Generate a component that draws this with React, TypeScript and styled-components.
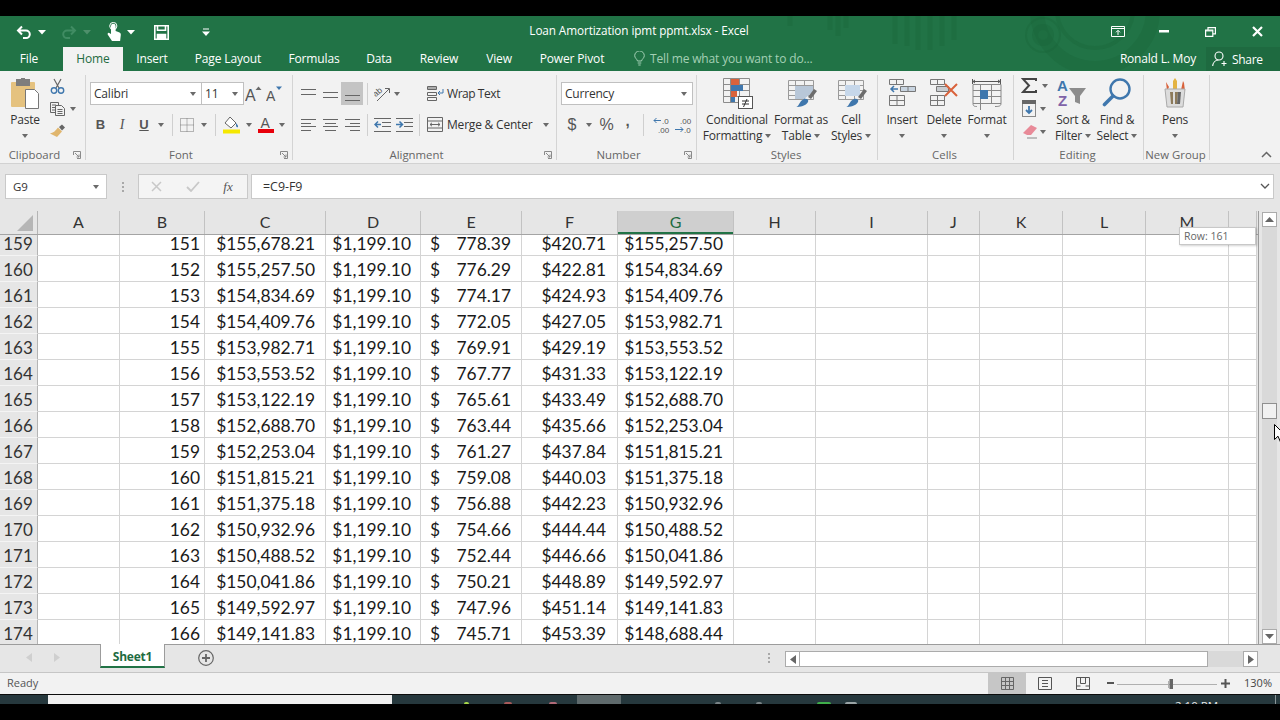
import React from "react";
import styled, { createGlobalStyle } from "styled-components";

const Global = createGlobalStyle`
  html, body { margin: 0; padding: 0; background: #000; }
  * { box-sizing: border-box; }
`;
const UI = `"Open Sans", "Noto Sans", sans-serif`;
const CELL = `Lato, "Open Sans", sans-serif`;

const Page = styled.div`
  width: 1280px; height: 720px; overflow: hidden; background: #000;
  display: flex; flex-direction: column; font-family: ${UI}; position: relative;
`;
const Bar = styled.div<{ $h: number }>`height: ${(p) => p.$h}px; flex: none; background: #000;`;
const Chrome = styled.div`flex: none; background: #217346; position: relative;`;
const TitleBar = styled.div`
  height: 31px; display: flex; align-items: center;
  position: relative; color: #fff;
`;
const Pattern = styled.svg`position: absolute; left: 0; top: 0; pointer-events: none;`;
const Qat = styled.div`display: flex; align-items: center; height: 100%; padding-top: 1px; position: relative;`;
const Slot = styled.div<{ $w: number }>`
  width: ${(p) => p.$w}px; flex: none; display: flex; align-items: center; justify-content: center; height: 100%;
`;
const TitleText = styled.div`
  position: absolute; left: 0; right: 2px; top: 0; height: 100%; line-height: 29px; text-align: center;
  font-size: 11.75px; letter-spacing: -0.1px;
`;
const WinButtons = styled.div`display: flex; margin-left: auto; height: 100%; align-items: center; position: relative;`;
const TabBar = styled.div`
  height: 24px; display: flex; align-items: stretch; color: #fff; font-size: 12px; position: relative;
`;
const Tab = styled.div<{ $w: number; $on?: boolean; $ml?: number }>`
  width: ${(p) => p.$w}px; flex: none; margin-left: ${(p) => p.$ml || 0}px; text-align: center; line-height: 23px;
  letter-spacing: -0.15px;
  background: ${(p) => (p.$on ? "#f2f2f2" : "transparent")}; color: ${(p) => (p.$on ? "#1e6b41" : "#fff")};
`;
const TellMe = styled.div`
  display: flex; align-items: center; margin-left: 15px; color: #a4d0b5; font-size: 12px; letter-spacing: -0.16px; gap: 5px; padding-bottom: 1px;
`;
const UserName = styled.div`margin-left: auto; line-height: 23px; letter-spacing: -0.2px; margin-right: 10px;`;
const Share = styled.div`
  width: 74px; background: #1e6a40; display: flex; align-items: center; padding-left: 6px; gap: 4px; letter-spacing: -0.3px; line-height: 23px;
`;

const Ribbon = styled.div`
  height: 93px; flex: none; background: #f2f2f2; border-bottom: 1px solid #d2d2d2;
  display: flex; align-items: flex-start; padding-top: 4px; color: #333; font-size: 12px;
`;
const Group = styled.div<{ $w: number }>`
  width: ${(p) => p.$w}px; height: 85px; flex: none; border-right: 1px solid #d4d4d4; position: relative;
  display: flex; flex-direction: column;
`;
const GroupBody = styled.div<{ $pl?: number }>`
  height: 72px; flex: none; display: flex; padding-left: ${(p) => p.$pl || 0}px;
`;
const GroupLabel = styled.div<{ $launch?: boolean }>`
  height: 13px; line-height: 16px; text-align: center; color: #666; font-size: 11.4px; letter-spacing: 0;
  padding-right: ${(p) => (p.$launch ? 16 : 2)}px; white-space: nowrap;
`;
const Launcher = styled.svg`position: absolute; right: 4px; bottom: 1px;`;
const BigButton = styled.div<{ $w: number }>`
  width: ${(p) => p.$w}px; flex: none; display: flex; flex-direction: column; align-items: center; padding-top: 3px;
  font-size: 12px; line-height: 16px; letter-spacing: -0.2px; white-space: nowrap; color: #333;
`;
const BigIcon = styled.div`height: 34px; width: 100%; display: flex; justify-content: center; flex: none;`;
const CaretLine = styled.div`display: flex; align-items: center; gap: 3px; height: 16px;`;
const Caret = styled.span`
  display: inline-block; flex: none; width: 0; height: 0; border-left: 3.5px solid transparent; border-right: 3.5px solid transparent;
  border-top: 4px solid #6a6a6a;
`;
const SmallStack = styled.div<{ $w: number }>`
  width: ${(p) => p.$w}px; flex: none; display: flex; flex-direction: column; margin-top: -1px;
`;
const StackRow = styled.div`height: 23px; display: flex; align-items: center; flex: none;`;
const Rows = styled.div`display: flex; flex-direction: column; gap: 8px; padding-top: 7px;`;
const Row2 = styled.div`display: flex; height: 23px; align-items: center;`;
const Combo = styled.div<{ $w: number }>`
  width: ${(p) => p.$w}px; height: 23px; flex: none; background: #fff; border: 1px solid #c0c0c0; margin-right: -1px;
  display: flex; align-items: center; justify-content: space-between; padding: 0 5px 0 3px; font-size: 12px; letter-spacing: -0.2px; color: #333;
`;
const VSep = styled.div`width: 1px; height: 22px; background: #cfcfcf;`;
const Glyph = styled.span<{ $size: number; $b?: boolean; $i?: boolean; $u?: boolean; $serif?: boolean; $raise?: number }>`
  font-family: ${(p) => (p.$serif ? `"Liberation Serif", serif` : `"Liberation Sans", sans-serif`)};
  font-size: ${(p) => p.$size}px; font-weight: ${(p) => (p.$b ? 700 : 400)};
  font-style: ${(p) => (p.$i ? "italic" : "normal")}; text-decoration: ${(p) => (p.$u ? "underline" : "none")};
  color: #555; line-height: 1; padding-bottom: ${(p) => p.$raise || 0}px;
`;
const Highlight = styled.div`
  width: 22px; height: 23px; background: #c4c4c4; display: flex; align-items: center; justify-content: center;
`;
const TextBtn = styled.div<{ $w: number; $ls: number }>`
  width: ${(p) => p.$w}px; display: flex; align-items: center; gap: 4px; padding-left: 1px; letter-spacing: ${(p) => p.$ls}px; white-space: nowrap; font-size: 12px; color: #333;
`;
const Collapse = styled.div`margin-left: auto; padding: 70px 8px 0 0;`;

const FormulaArea = styled.div`
  height: 47px; flex: none; background: #e6e6e6; display: flex; padding: 10px 6px 12px 5px; align-items: stretch;
  font-size: 12px; color: #333;
`;
const NameBox = styled.div`
  width: 102px; background: #fff; border: 1px solid #c9c9c9; display: flex; align-items: center; justify-content: space-between;
  padding: 0 7px 0 7px; font-size: 11.5px;
`;
const Dots = styled.div`
  width: 31px; flex: none; display: flex; flex-direction: column; align-items: center; justify-content: center; gap: 2px;
  span { width: 2px; height: 2px; background: #a8a8a8; }
`;
const FxBox = styled.div`
  width: 110px; background: #f4f4f4; border: 1px solid #c9c9c9; display: flex; align-items: center;
`;
const FormulaInput = styled.div`
  flex: 1; margin-left: 3px; background: #fff; border: 1px solid #c9c9c9; display: flex; align-items: center; justify-content: space-between;
  padding: 0 3px 0 11px; font-size: 12.4px;
`;

const GridArea = styled.div`height: 433px; flex: none; display: flex; background: #e6e6e6; position: relative; overflow: hidden;`;
const Sheet = styled.div`width: 1259px; flex: none; overflow: hidden; border-right: 1px solid #9c9c9c;`;
const COLS = "38px 82px 85px 121px 95px 101px 96px 116px 82px 112px 52px 83px 83px 83px 28px";
const HeaderRow = styled.div`
  height: 24px; display: grid; grid-template-columns: ${COLS}; background: #e6e6e6; border-bottom: 1px solid #a4a4a4;
`;
const Corner = styled.div`border-right: 1px solid #b4b4b4; display: flex; align-items: flex-start; padding: 4px 0 0 17px;`;
const ColHead = styled.div<{ $sel?: boolean }>`
  font-family: ${CELL}; font-size: 16px; text-align: center; line-height: 22px; height: 23px;
  border-right: 1px solid #c2c2c2; color: ${(p) => (p.$sel ? "#1e6b41" : "#333")};
  background: ${(p) => (p.$sel ? "#cfcfcf" : "transparent")};
  box-shadow: ${(p) => (p.$sel ? "inset 0 -2px 0 #217346" : "none")};
`;
const DataRow = styled.div<{ $h: number }>`
  height: ${(p) => p.$h}px; display: grid; grid-template-columns: ${COLS}; grid-template-rows: 26px; align-content: end; overflow: hidden; flex: none;
`;
const RowHead = styled.div`
  height: 26px; background: #e6e6e6; border-right: 1px solid #b4b4b4; border-bottom: 1px solid #f4f4f4; text-align: center;
  font-family: ${CELL}; font-size: 17px; line-height: 27px; color: #333; padding-right: 1px; overflow: hidden;
`;
const Cell = styled.div<{ $pr?: number }>`
  height: 26px; background: #fff; border-right: 1px solid #d4d4d4; border-bottom: 1px solid #d4d4d4; color: #1a1a1a;
  font-family: ${CELL}; font-size: 17.4px; line-height: 27px; text-align: right; padding-right: ${(p) => p.$pr || 0}px; white-space: nowrap;
  display: flex; justify-content: flex-end;
`;
const Acct = styled(Cell)`justify-content: space-between; padding-left: 9px;`;
const VScroll = styled.div`
  flex: 1; display: flex; flex-direction: column; align-items: center; padding-top: 1px; position: relative;
`;
const VTrack = styled.div`
  width: 15px; flex: 1; background: #d9d9d9; display: flex; flex-direction: column; align-items: center; padding-top: 176px;
`;
const SBtn = styled.div<{ $w?: number; $h?: number }>`
  width: ${(p) => p.$w || 15}px; height: ${(p) => p.$h || 15}px; flex: none; background: #fff; border: 1px solid #ababab;
  display: flex; align-items: center; justify-content: center;
`;
const Thumb = styled.div`width: 15px; height: 16px; background: #f1f1f1; border: 1px solid #8f8f8f;`;
const Tooltip = styled.div`
  position: absolute; left: 1179px; top: 16px; width: 77px; height: 18px; background: #fff; border: 1px solid #c8c8c8;
  box-shadow: 1px 1px 2px rgba(0,0,0,.18); font-size: 10.5px; line-height: 16px; padding-left: 4px; color: #666;
`;
const Pointer = styled.svg`position: absolute; left: 1274px; top: 213px;`;

const SheetBar = styled.div`
  height: 28px; flex: none; background: #e6e6e6; border-top: 1px solid #9c9c9c; display: flex; align-items: flex-start; position: relative;
`;
const NavSlot = styled.div<{ $w: number; $ml?: number }>`
  width: ${(p) => p.$w}px; margin-left: ${(p) => p.$ml || 0}px; height: 25px; flex: none; display: flex; align-items: center; justify-content: center;
`;
const SheetTab = styled.div`
  width: 65px; height: 24px; margin-top: -1px; background: #fff; border-left: 1px solid #9c9c9c; border-right: 1px solid #9c9c9c;
  border-bottom: 2px solid #217346; text-align: center; font-size: 12px; font-weight: 700; letter-spacing: -0.2px; line-height: 26px; color: #1e6b41; flex: none;
`;
const HScroll = styled.div`
  margin-left: 12px; margin-top: 6px; width: 473px; height: 16px; display: flex; background: #d9d9d9;
`;
const HThumb = styled.div`width: 408px; height: 16px; background: #fff; border: 1px solid #ababab; border-left: none; flex: none;`;
const HGap = styled.div`flex: 1;`;

const StatusBar = styled.div`
  height: 22px; flex: none; background: #f2f2f2; border-top: 1px solid #c6c6c6; display: flex; align-items: stretch;
  font-size: 11px; color: #555;
`;
const Ready = styled.div`padding-left: 7px; line-height: 20px; width: 988px; flex: none;`;
const ViewBtn = styled.div<{ $on?: boolean; $w: number }>`
  width: ${(p) => p.$w}px; flex: none; display: flex; align-items: center; justify-content: center; background: ${(p) => (p.$on ? "#c6c6c6" : "transparent")};
`;
const Zoom = styled.div`flex: 1; text-align: right; padding-right: 8px; line-height: 20px; color: #444;`;

const Taskbar = styled.div`height: 10px; flex: none; background: #26383d; border-top: 1px solid #0c0c0c; display: flex; overflow: hidden;`;
const TaskSeg = styled.div<{ $w: number; $c: string }>`width: ${(p) => p.$w}px; flex: none; background: ${(p) => p.$c}; height: 100%; position: relative; overflow: hidden;`;
const Spot = styled.span<{ $l: number; $c: string; $w?: number }>`
  position: absolute; left: ${(p) => p.$l}px; bottom: 0; width: ${(p) => p.$w || 8}px; height: 2px; border-radius: 4px 4px 0 0; background: ${(p) => p.$c};
`;
const Clock = styled.span`position: absolute; left: 284px; top: 4px; color: #e8e8e8; font-size: 11.5px; line-height: 14px; white-space: nowrap;`;
const TaskEdge = styled.span`position: absolute; left: 384px; top: 0; width: 1px; height: 100%; background: #8a9598;`;

const BLUE = "#3f77ad";
const RED = "#d9623b";

const Undo = ({ c = "#fff" }: { c?: string }) => (
  <svg width="16" height="15" viewBox="0 0 16 15" fill="none" stroke={c} strokeWidth="2"><path d="M6 1.5 2 5.5l4 4M2 5.5h8a3.8 3.8 0 0 1 0 7.6H7" /></svg>
);
const Redo = ({ c }: { c: string }) => (
  <svg width="16" height="15" viewBox="0 0 16 15" fill="none" stroke={c} strokeWidth="2"><path d="M10 1.5l4 4-4 4M14 5.5H6a3.8 3.8 0 0 0 0 7.6h3" /></svg>
);
const WhiteCaret = ({ o = 1 }: { o?: number }) => (
  <svg width="8" height="5" opacity={o}><path d="M0 0h8L4 4.5z" fill="#fff" /></svg>
);
const Touch = () => (
  <svg width="14" height="20" viewBox="0 0 14 20"><path d="M4 7V4a2.3 2.3 0 0 1 4.6 0v5l3.4 1.2c1.3.5 2 1.4 1.8 2.8l-.7 6H5L1 13c-.8-1-.3-2 .8-2.2L4 12z" fill="#fff" /><circle cx="6.3" cy="4" r="3.6" fill="none" stroke="#fff" strokeWidth="1" /></svg>
);
const SaveIcon = () => (
  <svg width="15" height="15" viewBox="0 0 15 15" fill="none" stroke="#fff" strokeWidth="1.6"><path d="M.8.8h13.4v13.4H.8z" /><path d="M3.5 1v4.2h8V1" /><path d="M3.5 14v-4.5h8V14" fill="#fff" /></svg>
);
const QatMore = () => (
  <svg width="8" height="8"><path d="M1 1h6" stroke="#fff" /><path d="M0 3.5h8L4 8z" fill="#fff" /></svg>
);
const RibbonDisplay = () => (
  <svg width="14" height="11" viewBox="0 0 14 11" fill="none" stroke="#fff"><path d="M.5.5h13v10H.5zM.5 2.5h13" /><path d="M7 9V4.5M5 6.3l2-2 2 2" /></svg>
);
const MinIcon = () => <svg width="10" height="3"><path d="M0 0h10v2.5H0z" fill="#fff" /></svg>;
const RestoreIcon = () => (
  <svg width="11" height="10" viewBox="0 0 11 10" fill="none" stroke="#fff" strokeWidth="1.2"><path d="M.6 3h7.2v6.4H.6zM3 3V.6h7.4v6.2H8" /><path d="M.6 3.8h7.2" /></svg>
);
const CloseIcon = () => (
  <svg width="11" height="11" viewBox="0 0 11 11" stroke="#fff" strokeWidth="2.2"><path d="M1 1l9 9M10 1l-9 9" /></svg>
);
const Bulb = () => (
  <svg width="11" height="15" viewBox="0 0 11 15" fill="none" stroke="#a4d0b5" strokeWidth="1"><path d="M3.5 10C3 8 .7 7 .7 4.7a4.8 4.8 0 0 1 9.6 0C10.3 7 8 8 7.5 10zM3.7 12h3.6M4.3 14h2.4" /></svg>
);
const UserPlus = () => (
  <svg width="16" height="16" viewBox="0 0 16 16" fill="none" stroke="#fff" strokeWidth="1.1"><circle cx="7" cy="5" r="4" /><path d="M.7 15c.3-3.3 2.6-6 5.7-6" /><path d="M12 10v5M9.5 12.5h5" /></svg>
);

const PasteIcon = () => (
  <svg width="30" height="32" viewBox="0 0 30 32"><rect x="1" y="4" width="24" height="25" rx="1" fill="#e5c27f" /><rect x="6" y="1" width="14" height="7" fill="#7d7d7d" /><rect x="11" y="0" width="4" height="3" fill="#7d7d7d" /><path d="M15.5 11.5h9l4 4v15h-13z" fill="#fff" stroke="#777" /></svg>
);
const CutIcon = () => (
  <svg width="15" height="16" viewBox="0 0 15 16" fill="none"><path d="M4 1l5 9M11 1l-5 9" stroke="#666" strokeWidth="1.2" /><circle cx="4" cy="12.5" r="2.7" stroke={BLUE} strokeWidth="1.4" /><circle cx="11" cy="12.5" r="2.7" stroke={BLUE} strokeWidth="1.4" /></svg>
);
const CopyIcon = () => (
  <svg width="15" height="14" viewBox="0 0 15 14" fill="#f2f2f2" stroke="#666"><path d="M.5.5h8v10h-8zM2 3h4M2 5.5h4M2 8h4" /><path d="M5.5 3.5h6l3 3v7h-9z" /><path d="M7.5 7.5h5M7.5 9.5h5M7.5 11.5h5" /></svg>
);
const Painter = () => (
  <svg width="17" height="15" viewBox="0 0 17 15"><path d="M10 3l3-2.500 3 3L13 6.500z" fill="#666" /><path d="M9 3.500l4 4L8 13 1 9.500c3-.5 5.500-2.500 8-6z" fill="#e0b66e" /></svg>
);
const GrowA = ({ up }: { up: boolean }) => (
  <svg width="18" height="18" viewBox="0 0 18 18"><text x="0" y="16" fontSize={up ? 16 : 14} fontFamily="Liberation Sans" fill="#555">A</text><path d={up ? "M10.500 5l3-3.500 3 3.500z" : "M10 1.500h6L13 5z"} fill={up ? "#6a6a6a" : BLUE} /></svg>
);
const BorderIcon = () => (
  <svg width="14" height="14" viewBox="0 0 14 14" fill="none" stroke="#777" strokeDasharray="1 1"><path d="M.5.5h13v13H.5zM7 .5v13M.5 7h13" /></svg>
);
const FillIcon = () => (
  <svg width="17" height="18" viewBox="0 0 17 18"><path d="M7 1l6 6-5 5-6-5z" fill="#fff" stroke="#666" /><path d="M13 7c1 1.500 2.500 2.500 2 4-.6 1-2-.2-2-1.500z" fill={BLUE} /><rect y="13.500" x="0" width="17" height="4" fill="#f5e800" /></svg>
);
const ColorA = () => (
  <svg width="16" height="17" viewBox="0 0 16 17"><text x="2.500" y="12" fontSize="14" fontFamily="Liberation Sans" fill="#555">A</text><rect y="13" width="16" height="4" fill="#e8000b" /></svg>
);
const Lines = ({ w = 15, ys, x = [] as number[][] }: { w?: number; ys: number[]; x?: number[][] }) => (
  <svg width={w} height="16" viewBox={`0 0 ${w} 16`} stroke="#666">
    {ys.map((y, i) => <path key={i} d={`M${x[i] ? x[i][0] : 0} ${y}.5H${x[i] ? x[i][1] : w}`} />)}
  </svg>
);
const Orient = () => (
  <svg width="17" height="17" viewBox="0 0 17 17" fill="none" stroke="#666"><text x="0" y="10" transform="rotate(-40 4 9)" fontSize="8.500" stroke="none" fill="#555" fontFamily="Liberation Sans">ab</text><path d="M3 16L15 4M11 3.500h4.500V8" /></svg>
);
const Indent = ({ flip }: { flip: boolean }) => (
  <svg width="17" height="14" viewBox="0 0 17 14" fill="none"><path d="M0 .5h17M8 4.500h9M8 8.500h9M0 13.500h17" stroke="#666" /><path d={flip ? "M0 6.500h6M3.500 3.500l3 3-3 3" : "M7 6.500H1M4 3.500l-3 3 3 3"} stroke={BLUE} strokeWidth="1.500" /></svg>
);
const WrapIcon = () => (
  <svg width="17" height="15" viewBox="0 0 17 15" fill="none" stroke="#666"><path d="M.5.5h9v3h-9zM.5 6.500h9v3h-9zM.5 11.500h9v3h-9zM1 2h8" /><path d="M16 3v4h-5M13 5l-2 2 2 2" stroke={BLUE} /></svg>
);
const MergeIcon = () => (
  <svg width="16" height="15" viewBox="0 0 16 15" fill="none" stroke="#666"><path d="M.5.5h15v14H.5zM.500 4h15M.500 11h15M.500 4v7M15.500 4v7" /><path d="M3 7.500h10M5 5.800l-2 1.700 2 1.700M11 5.800l2 1.700-2 1.700" /></svg>
);
const DecIcon = ({ inc }: { inc: boolean }) => (
  <svg width="18" height="18" viewBox="0 0 18 18" fontFamily="Liberation Sans" fontSize="8" fill="#555">
    <text x={inc ? 9 : 5} y="7.500">{inc ? ".0" : ".00"}</text>
    <text x={inc ? 5 : 9} y="17">{inc ? ".00" : ".0"}</text>
    <path d={inc ? "M8 4.500H1M3.500 2L1 4.500 3.500 7" : "M0 13.500h8M5.500 11L8 13.500 5.500 16"} fill="none" stroke={BLUE} />
  </svg>
);
const Launch = () => (
  <Launcher width="8" height="8" viewBox="0 0 8 8" fill="none" stroke="#8a8a8a"><path d="M.5 4V.5H7.500V7.500H4" /><path d="M2 2l4 4M6 3.500V6H3.500" /></Launcher>
);
const CondIcon = () => (
  <svg width="32" height="32" viewBox="0 0 32 32" fill="none">
    <path d="M2.500 .5h26v24h-26zM2.500 6.500h26M2.500 12.500h26M2.500 18.500h26M9.500 .5v24M18.500 .5v24" stroke="#8c8c8c" />
    <rect x="10" y="1" width="8" height="6" fill={RED} /><rect x="10" y="7" width="12" height="6" fill={BLUE} />
    <rect x="10" y="13" width="6" height="6" fill={RED} /><rect x="10" y="19" width="4" height="5" fill={BLUE} />
    <rect x="17.500" y="18.500" width="14" height="12" fill="#fff" stroke="#555" />
    <path d="M21 23h7M21 26h7M26 21l-3.500 8" stroke="#333" />
  </svg>
);
const TableFmt = ({ cell }: { cell: boolean }) => (
  <svg width="32" height="32" viewBox="0 0 32 32" fill="none">
    <path d="M3.500 2.500h25v19h-25zM3.500 7.500h25M3.500 12.500h25M3.500 17.500h25M10.500 2.500v19M19.500 2.500v19" stroke="#9a9a9a" />
    {cell ? <rect x="10" y="7" width="15" height="11" fill="#c6d7ea" /> : <path d="M10 8h18v6l-9 7h-9z" fill="#b8c7d8" />}
    <path d="M23 19l6-8 3 2-6 8z" fill="#6c6c6c" />
    <path d="M11 29c3 0 3-6 8-8 3-1 5 1 4 3-2 4-8 5-12 5z" fill={BLUE} />
  </svg>
);
const InsertIcon = () => (
  <svg width="28" height="30" viewBox="0 0 28 30" fill="none" stroke="#777">
    <path d="M1.500 1.500h14v5h-14zM8.500 1.500v5M1.500 17.500h15v10h-15zM9 17.500v10M1.500 22.500h15" />
    <path d="M12.500 8.500h15v5h-15zM20 8.500v5" fill="#c8d4e0" />
    <path d="M10 11H3M6 8l-3 3 3 3" stroke={BLUE} strokeWidth="1.500" />
  </svg>
);
const DeleteIcon = () => (
  <svg width="30" height="30" viewBox="0 0 30 30" fill="none" stroke="#777">
    <path d="M1.500 1.500h14v5h-14zM8.500 1.500v5M1.500 17.500h14v10h-14zM8.500 17.500v10M1.500 22.500h14" />
    <path d="M7.500 8.500h12v5h-12z" fill="#c8ccd0" />
    <path d="M16 6l12 12M28 6L16 18" stroke={RED} strokeWidth="2" />
  </svg>
);
const FormatIcon = () => (
  <svg width="30" height="32" viewBox="0 0 30 32" fill="none" stroke="#888">
    <path d="M.5 1v5M28.500 1v5M1 3.500h27M3 2l-2 1.500L3 5M26 2l2 1.500L26 5" stroke="#555" />
    <path d="M1 6.500h28v19H1zM8.500 6.500v26M19.500 6.500v19M1 12.500h28M1 18.500h28M1 25.500c0 3 2 3 4 3M29 25.500c0 3-3 3-6 3" />
    <rect x="8" y="12" width="8" height="9" fill={BLUE} stroke="none" />
  </svg>
);
const SumIcon = () => <svg width="16" height="15" viewBox="0 0 16 15" fill="none" stroke="#444" strokeWidth="2"><path d="M15 3V1H2l6 6.500L2 14h13v-2" /></svg>;
const FillDown = () => (
  <svg width="14" height="17" viewBox="0 0 14 17" fill="none"><rect x=".5" y=".5" width="13" height="16" stroke="#888" /><rect x="0" y="0" width="14" height="4" fill="#666" /><path d="M7 6v7M4 10l3 3 3-3" stroke={BLUE} strokeWidth="1.800" /></svg>
);
const Eraser = () => (
  <svg width="15" height="14" viewBox="0 0 15 14"><path d="M9 0l6 3-6 7H5L1 8z" fill="#e88a98" /><path d="M5 13h10" stroke="#888" /></svg>
);
const SortIcon = () => (
  <svg width="32" height="30" viewBox="0 0 32 30" fontFamily="Liberation Sans" fontSize="15" fontWeight="700">
    <text x="0" y="13" fill={BLUE}>A</text><text x="1" y="28" fill="#8063a8">Z</text>
    <path d="M12 10h17l-6 8v8l-5-2v-6z" fill="#8c8c8c" />
  </svg>
);
const FindIcon = () => (
  <svg width="30" height="30" viewBox="0 0 30 30" fill="none"><circle cx="18" cy="11" r="9.500" stroke={BLUE} strokeWidth="2.400" /><path d="M11 18L2.500 26.500" stroke={BLUE} strokeWidth="3.600" strokeLinecap="round" /></svg>
);
const PensIcon = () => (
  <svg width="22" height="30" viewBox="0 0 22 30"><path d="M3 13L2 4l3 5zM17 12l2-9 1 2 1 8z" fill={RED} /><path d="M9 12V3l2-3 2 3v9z" fill="#e3b341" /><path d="M1 11h20l-2 18H3z" fill="#dcdcdc" stroke="#aaa" /><path d="M6 14l1 12h2V14zM11 14v12h2l1-12z" fill="#8c7a5a" /><path d="M14 14l-1 12h3l1-12z" fill="#666" /></svg>
);
const ChevUp = () => <svg width="11" height="7" fill="none" stroke="#666" strokeWidth="1.500"><path d="M1 6l4.500-4.500L10 6" /></svg>;
const SheetPlus = () => (
  <svg width="16" height="16" fill="none" stroke="#666"><circle cx="8" cy="8" r="7.300" strokeWidth="1.200" /><path d="M8 4v8M4 8h8" strokeWidth="1.800" /></svg>
);
const Tri = ({ d, c = "#666" }: { d: "u" | "d" | "l" | "r"; c?: string }) => {
  const p = { u: "M0 5h9L4.500 0z", d: "M0 0h9L4.500 5z", l: "M6 0v9L0 4.500z", r: "M0 0v9l6-4.500z" }[d];
  return <svg width={d === "l" || d === "r" ? 6 : 9} height={d === "l" || d === "r" ? 9 : 5}><path d={p} fill={c} /></svg>;
};

const rows: string[][] = [
  ["159","151","$155,678.21","778.39","$420.71","$155,257.50"],
  ["160","152","$155,257.50","776.29","$422.81","$154,834.69"],
  ["161","153","$154,834.69","774.17","$424.93","$154,409.76"],
  ["162","154","$154,409.76","772.05","$427.05","$153,982.71"],
  ["163","155","$153,982.71","769.91","$429.19","$153,553.52"],
  ["164","156","$153,553.52","767.77","$431.33","$153,122.19"],
  ["165","157","$153,122.19","765.61","$433.49","$152,688.70"],
  ["166","158","$152,688.70","763.44","$435.66","$152,253.04"],
  ["167","159","$152,253.04","761.27","$437.84","$151,815.21"],
  ["168","160","$151,815.21","759.08","$440.03","$151,375.18"],
  ["169","161","$151,375.18","756.88","$442.23","$150,932.96"],
  ["170","162","$150,932.96","754.66","$444.44","$150,488.52"],
  ["171","163","$150,488.52","752.44","$446.66","$150,041.86"],
  ["172","164","$150,041.86","750.21","$448.89","$149,592.97"],
  ["173","165","$149,592.97","747.96","$451.14","$149,141.83"],
  ["174","166","$149,141.83","745.71","$453.39","$148,688.44"],
];
const heads = ["A","B","C","D","E","F","G","H","I","J","K","L","M",""];

export default function App() {
  return (
    <Page>
      <Global />
      <Bar $h={16} />
      <Chrome>
        <Pattern width="1280" height="55" viewBox="0 0 1280 55" fill="none">
          <g stroke="#1a6239" strokeOpacity=".32">
            <circle cx="1043" cy="19" r="8" strokeWidth="6" />
            <circle cx="1043" cy="19" r="17" strokeWidth="2" />
            <circle cx="1095" cy="-6" r="58" strokeWidth="14" />
            <circle cx="1095" cy="-6" r="38" strokeWidth="4" />
            <path d="M895 0v28M907 0v30M918 0v34M930 0v34M942 0v30M954 0v24M830 0v14M838 0v20M846 0v12M790 0v10" strokeWidth="5" />
          </g>
        </Pattern>
        <TitleBar>
          <Qat>
            <Slot $w={16} />
            <Slot $w={16}><Undo /></Slot>
            <Slot $w={20}><WhiteCaret /></Slot>
            <Slot $w={9} />
            <Slot $w={16}><Redo c="#408c63" /></Slot>
            <Slot $w={19}><WhiteCaret o={0.2} /></Slot>
            <Slot $w={10} />
            <Slot $w={16}><Touch /></Slot>
            <Slot $w={18}><WhiteCaret /></Slot>
            <Slot $w={13} />
            <Slot $w={17}><SaveIcon /></Slot>
            <Slot $w={28} />
            <Slot $w={16}><QatMore /></Slot>
          </Qat>
          <TitleText>Loan Amortization ipmt ppmt.xlsx - Excel</TitleText>
          <WinButtons>
            <Slot $w={46}><RibbonDisplay /></Slot>
            <Slot $w={46}><MinIcon /></Slot>
            <Slot $w={47}><RestoreIcon /></Slot>
            <Slot $w={46}><CloseIcon /></Slot>
          </WinButtons>
        </TitleBar>
        <TabBar>
          <Tab $w={58}>File</Tab>
          <Tab $w={60} $ml={5} $on>Home</Tab>
          <Tab $w={58}>Insert</Tab>
          <Tab $w={94}>Page Layout</Tab>
          <Tab $w={78}>Formulas</Tab>
          <Tab $w={52}>Data</Tab>
          <Tab $w={68}>Review</Tab>
          <Tab $w={52}>View</Tab>
          <Tab $w={94}>Power Pivot</Tab>
          <TellMe><Bulb />Tell me what you want to do...</TellMe>
          <UserName>Ronald L. Moy</UserName>
          <Share><UserPlus />Share</Share>
        </TabBar>
      </Chrome>
      <Ribbon>
        <Group $w={86}>
          <GroupBody $pl={3}>
            <BigButton $w={44}>
              <BigIcon><PasteIcon /></BigIcon>
              <div>Paste</div>
              <CaretLine><Caret /></CaretLine>
            </BigButton>
            <SmallStack $w={34}>
              <StackRow><Slot $w={20}><CutIcon /></Slot></StackRow>
              <StackRow><Slot $w={20}><CopyIcon /></Slot><Slot $w={12}><Caret /></Slot></StackRow>
              <StackRow><Slot $w={20}><Painter /></Slot></StackRow>
            </SmallStack>
          </GroupBody>
          <GroupLabel $launch>Clipboard</GroupLabel>
          <Launch />
        </Group>
        <Group $w={207}>
          <GroupBody $pl={4}>
            <Rows>
              <Row2>
                <Combo $w={112}>Calibri<Caret /></Combo>
                <Combo $w={43}>11<Caret /></Combo>
                <Slot $w={21}><GrowA up /></Slot>
                <Slot $w={21}><GrowA up={false} /></Slot>
              </Row2>
              <Row2>
                <Slot $w={21}><Glyph $size={13} $b>B</Glyph></Slot>
                <Slot $w={22}><Glyph $size={14} $i $serif>I</Glyph></Slot>
                <Slot $w={22}><Glyph $size={13} $b $u>U</Glyph></Slot>
                <Slot $w={12}><Caret /></Slot>
                <Slot $w={10}><VSep /></Slot>
                <Slot $w={20}><BorderIcon /></Slot>
                <Slot $w={14}><Caret /></Slot>
                <Slot $w={8}><VSep /></Slot>
                <Slot $w={25}><FillIcon /></Slot>
                <Slot $w={9}><Caret /></Slot>
                <Slot $w={25}><ColorA /></Slot>
                <Slot $w={8}><Caret /></Slot>
              </Row2>
            </Rows>
          </GroupBody>
          <GroupLabel $launch>Font</GroupLabel>
          <Launch />
        </Group>
        <Group $w={264}>
          <GroupBody $pl={4}>
            <Rows>
              <Row2>
                <Slot $w={22}><Lines ys={[3, 8]} /></Slot>
                <Slot $w={22}><Lines ys={[6, 11]} /></Slot>
                <Highlight><Lines ys={[9, 14]} /></Highlight>
                <Slot $w={8}><VSep /></Slot>
                <Slot $w={22}><Orient /></Slot>
                <Slot $w={8}><Caret /></Slot>
                <Slot $w={23} />
                <Slot $w={22}><WrapIcon /></Slot>
                <TextBtn $w={70} $ls={-0.45}>Wrap Text</TextBtn>
              </Row2>
              <Row2>
                <Slot $w={22}><Lines ys={[2, 6, 9, 13]} x={[[0, 15], [0, 10], [0, 15], [0, 10]]} /></Slot>
                <Slot $w={22}><Lines ys={[2, 6, 9, 13]} x={[[0, 15], [2, 13], [0, 15], [2, 13]]} /></Slot>
                <Slot $w={22}><Lines ys={[2, 6, 9, 13]} x={[[0, 15], [5, 15], [0, 15], [5, 15]]} /></Slot>
                <Slot $w={8}><VSep /></Slot>
                <Slot $w={22}><Indent flip={false} /></Slot>
                <Slot $w={22}><Indent flip /></Slot>
                <Slot $w={9}><VSep /></Slot>
                <Slot $w={22}><MergeIcon /></Slot>
                <TextBtn $w={100} $ls={-0.2}>Merge &amp; Center<Slot $w={20}><Caret /></Slot></TextBtn>
              </Row2>
            </Rows>
          </GroupBody>
          <GroupLabel $launch>Alignment</GroupLabel>
          <Launch />
        </Group>
        <Group $w={140}>
          <GroupBody $pl={4}>
            <Rows>
              <Row2><Combo $w={132}>Currency<Caret /></Combo></Row2>
              <Row2>
                <Slot $w={22}><Glyph $size={16}>$</Glyph></Slot>
                <Slot $w={11}><Caret /></Slot>
                <Slot $w={25}><Glyph $size={16}>%</Glyph></Slot>
                <Slot $w={17}><Glyph $size={15} $b $raise={8}>,</Glyph></Slot>
                <Slot $w={15}><VSep /></Slot>
                <Slot $w={22}><DecIcon inc /></Slot>
                <Slot $w={22}><DecIcon inc={false} /></Slot>
              </Row2>
            </Rows>
          </GroupBody>
          <GroupLabel $launch>Number</GroupLabel>
          <Launch />
        </Group>
        <Group $w={181}>
          <GroupBody $pl={6}>
            <BigButton $w={68}>
              <BigIcon><CondIcon /></BigIcon>
              <div>Conditional</div>
              <CaretLine>Formatting<Caret /></CaretLine>
            </BigButton>
            <BigButton $w={60}>
              <BigIcon><TableFmt cell={false} /></BigIcon>
              <div>Format as</div>
              <CaretLine>Table<Caret /></CaretLine>
            </BigButton>
            <BigButton $w={40}>
              <BigIcon><TableFmt cell /></BigIcon>
              <div>Cell</div>
              <CaretLine>Styles<Caret /></CaretLine>
            </BigButton>
          </GroupBody>
          <GroupLabel>Styles</GroupLabel>
        </Group>
        <Group $w={136}>
          <GroupBody $pl={3}>
            <BigButton $w={42}>
              <BigIcon><InsertIcon /></BigIcon>
              <div>Insert</div>
              <CaretLine><Caret /></CaretLine>
            </BigButton>
            <BigButton $w={42}>
              <BigIcon><DeleteIcon /></BigIcon>
              <div>Delete</div>
              <CaretLine><Caret /></CaretLine>
            </BigButton>
            <BigButton $w={44}>
              <BigIcon><FormatIcon /></BigIcon>
              <div>Format</div>
              <CaretLine><Caret /></CaretLine>
            </BigButton>
          </GroupBody>
          <GroupLabel>Cells</GroupLabel>
        </Group>
        <Group $w={130}>
          <GroupBody $pl={5}>
            <SmallStack $w={32}>
              <StackRow><Slot $w={20}><SumIcon /></Slot><Slot $w={12}><Caret /></Slot></StackRow>
              <StackRow><Slot $w={20}><FillDown /></Slot><Slot $w={8}><Caret /></Slot></StackRow>
              <StackRow><Slot $w={20}><Eraser /></Slot><Slot $w={8}><Caret /></Slot></StackRow>
            </SmallStack>
            <BigButton $w={44}>
              <BigIcon><SortIcon /></BigIcon>
              <div>Sort &amp;</div>
              <CaretLine>Filter<Caret /></CaretLine>
            </BigButton>
            <BigButton $w={44}>
              <BigIcon><FindIcon /></BigIcon>
              <div>Find &amp;</div>
              <CaretLine>Select<Caret /></CaretLine>
            </BigButton>
          </GroupBody>
          <GroupLabel>Editing</GroupLabel>
        </Group>
        <Group $w={66}>
          <GroupBody>
            <BigButton $w={62}>
              <BigIcon><PensIcon /></BigIcon>
              <div>Pens</div>
              <CaretLine><Caret /></CaretLine>
            </BigButton>
          </GroupBody>
          <GroupLabel>New Group</GroupLabel>
        </Group>
        <Collapse><ChevUp /></Collapse>
      </Ribbon>
      <FormulaArea>
        <NameBox>G9<Caret /></NameBox>
        <Dots><span /><span /><span /></Dots>
        <FxBox>
          <Slot $w={34}><svg width="11" height="11" stroke="#c8c8c8" strokeWidth="1.500"><path d="M1 1l9 9M10 1l-9 9" /></svg></Slot>
          <Slot $w={40}><svg width="14" height="11" fill="none" stroke="#c8c8c8" strokeWidth="1.800"><path d="M1 6l4 4 8-9" /></svg></Slot>
          <Slot $w={30}><Glyph $size={13} $i $serif>fx</Glyph></Slot>
        </FxBox>
        <FormulaInput>=C9-F9<svg width="10" height="7" fill="none" stroke="#555" strokeWidth="1.300"><path d="M1 1l4 4 4-4" /></svg></FormulaInput>
      </FormulaArea>
      <GridArea>
        <Sheet>
          <HeaderRow>
            <Corner><svg width="16" height="16"><path d="M16 0v16H0z" fill="#b6b6b6" /></svg></Corner>
            {heads.map((h, i) => <ColHead key={i} $sel={h === "G"}>{h}</ColHead>)}
          </HeaderRow>
          {rows.map((r, i) => (
            <DataRow key={r[0]} $h={i === 0 ? 21 : 26}>
              <RowHead>{r[0]}</RowHead>
              <Cell />
              <Cell $pr={4}>{r[1]}</Cell>
              <Cell $pr={10}>{r[2]}</Cell>
              <Cell $pr={9}>$1,199.10</Cell>
              <Acct $pr={10}><span>$</span><span>{r[3]}</span></Acct>
              <Cell $pr={11}>{r[4]}</Cell>
              <Cell $pr={10}>{r[5]}</Cell>
              <Cell /><Cell /><Cell /><Cell /><Cell /><Cell /><Cell />
            </DataRow>
          ))}
        </Sheet>
        <VScroll>
          <SBtn><Tri d="u" /></SBtn>
          <VTrack><Thumb /></VTrack>
          <SBtn><Tri d="d" /></SBtn>
        </VScroll>
        <Tooltip>Row: 161</Tooltip>
        <Pointer width="12" height="19" viewBox="0 0 12 19"><path d="M.5.5v15l3.500-3.300 2.500 5.800 2.500-1-2.500-5.500h5z" fill="#fff" stroke="#000" /></Pointer>
      </GridArea>
      <SheetBar>
        <NavSlot $w={20} $ml={19}><Tri d="l" c="#cfcfcf" /></NavSlot>
        <NavSlot $w={20} $ml={8}><Tri d="r" c="#cfcfcf" /></NavSlot>
        <NavSlot $w={33} />
        <SheetTab>Sheet1</SheetTab>
        <NavSlot $w={16} $ml={33}><SheetPlus /></NavSlot>
        <NavSlot $w={8} $ml={551}><Dots><span /><span /><span /></Dots></NavSlot>
        <HScroll>
          <SBtn $h={16}><Tri d="l" /></SBtn>
          <HThumb />
          <HGap />
          <SBtn $h={16}><Tri d="r" /></SBtn>
        </HScroll>
      </SheetBar>
      <StatusBar>
        <Ready>Ready</Ready>
        <ViewBtn $w={38} $on>
          <svg width="13" height="13" fill="none" stroke="#666"><path d="M.5.5h12v12H.5zM4.500.5v12M8.500.5v12M.5 4.500h12M.5 8.500h12" /></svg>
        </ViewBtn>
        <ViewBtn $w={38}>
          <svg width="14" height="13" fill="none" stroke="#555"><path d="M.5.5h13v12H.5zM4 3.500h6M4 6.500h6M4 9.500h6" /></svg>
        </ViewBtn>
        <ViewBtn $w={38}>
          <svg width="14" height="13" fill="none" stroke="#555"><path d="M.5.5h13v12H.5zM4.500.5v6h5v-6M.5 9h4M9.500 9h4" /></svg>
        </ViewBtn>
        <ViewBtn $w={1} />
        <ViewBtn $w={14}><svg width="7" height="3"><path d="M0 0h7v2H0z" fill="#555" /></svg></ViewBtn>
        <ViewBtn $w={100}>
          <svg width="100" height="12"><path d="M0 6.500h100M51.500 3v7" stroke="#b0b0b0" /><rect x="52.500" y="1" width="3.500" height="10" fill="#666" /></svg>
        </ViewBtn>
        <ViewBtn $w={16}><svg width="9" height="9"><path d="M0 3.500h9v2H0zM3.500 0h2v9h-2z" fill="#555" /></svg></ViewBtn>
        <Zoom>130%</Zoom>
      </StatusBar>
      <Taskbar>
        <TaskSeg $w={48} $c="#26383d" />
        <TaskSeg $w={344} $c="#f0f0f0" />
        <TaskSeg $w={185} $c="#26383d">
          <Spot $l={72} $c="#a8d84a" $w={5} />
          <Spot $l={112} $c="#a85a5a" />
          <Spot $l={157} $c="#b06a78" />
        </TaskSeg>
        <TaskSeg $w={44} $c="#5f6a6c" />
        <TaskSeg $w={270} $c="#26383d">
          <Spot $l={94} $c="#7a8487" $w={6} />
          <Spot $l={135} $c="#7a8487" $w={6} />
          <Spot $l={196} $c="#3fae4a" $w={14} />
          <Spot $l={224} $c="#9aa4a6" $w={12} />
        </TaskSeg>
        <TaskSeg $w={389} $c="#26383d">
          <Clock>2:10 PM</Clock>
          <TaskEdge />
        </TaskSeg>
      </Taskbar>
      <Bar $h={16} />
    </Page>
  );
}
